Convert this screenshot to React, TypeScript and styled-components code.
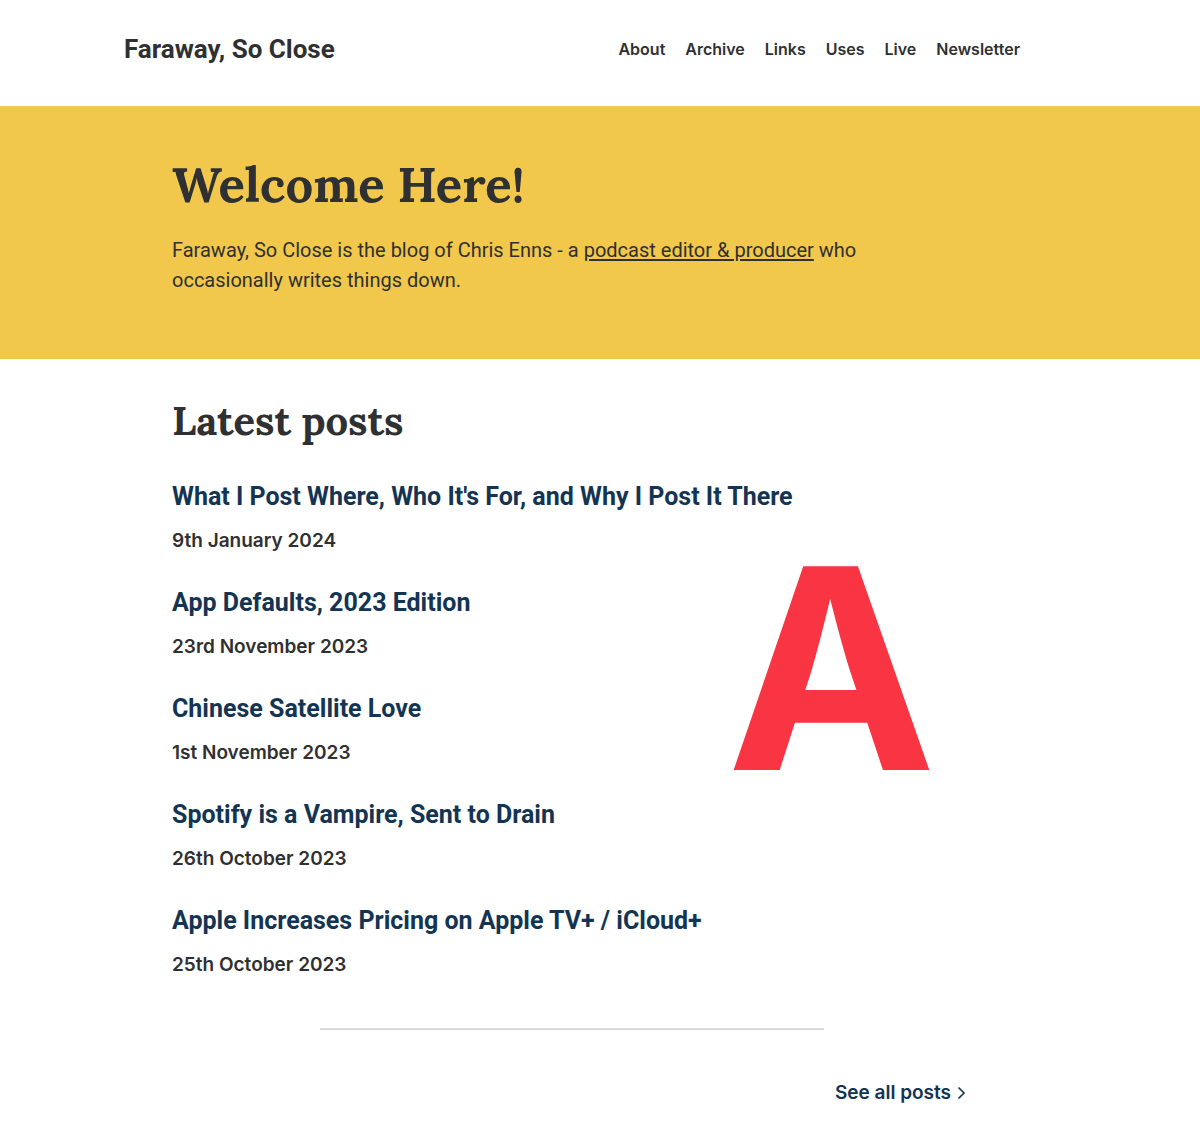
import React from "react";
import styled, { createGlobalStyle } from "styled-components";

const sans = `Roboto, "Liberation Sans", sans-serif`;
const grotesk = `Inter, "Liberation Sans", sans-serif`;
const serif = `Lora, "Noto Serif", "Liberation Serif", serif`;

const ink = "#2f3031";
const navy = "#133452";
const sun = "#f1c74c";

const GlobalStyle = createGlobalStyle`
  *, *::before, *::after {
    box-sizing: border-box;
  }

  body {
    margin: 0;
    background: #ffffff;
    color: ${ink};
    font-family: ${sans};
    font-size: 20px;
    line-height: 30px;
  }

  h1, h2, h3, p, ul {
    margin: 0;
    padding: 0;
  }

  ul {
    list-style: none;
  }

  a {
    color: inherit;
    text-decoration: none;
  }
`;

/* Every band keeps a wider gutter on its right side. */
const Band = styled.div`
  padding-left: 24px;
  padding-right: 80px;
`;

const HeaderBar = styled.header`
  display: flex;
  flex-wrap: wrap;
  align-items: center;
  justify-content: space-between;
  gap: 8px 24px;
  max-width: 896px;
  margin: 0 auto;
  padding: 32px 0 40px;
`;

const SiteName = styled.a`
  font-size: 26px;
  font-weight: 700;
  line-height: 34px;
`;

const NavList = styled.ul`
  display: flex;
  flex-wrap: wrap;
  gap: 4px 20px;
  font-family: ${grotesk};
  font-size: 16px;
  font-weight: 600;
`;

const Hero = styled(Band)`
  padding-top: 48px;
  padding-bottom: 64px;
  background: ${sun};
`;

const Column = styled.div`
  position: relative;
  max-width: 800px;
  margin: 0 auto;
`;

const Title = styled.h1`
  font-family: ${serif};
  font-size: 49px;
  font-weight: 700;
  line-height: 60px;
`;

const Intro = styled.p`
  max-width: 720px;
  margin-top: 21px;
`;

const IntroLink = styled.a`
  text-decoration: underline;
  text-decoration-thickness: 2px;
  text-underline-offset: 2px;
`;

const Latest = styled(Band)`
  padding-top: 32px;
  padding-bottom: 20px;
`;

const SectionTitle = styled.h2`
  font-family: ${serif};
  font-size: 40px;
  font-weight: 700;
  line-height: 60px;
`;

const PostList = styled.ul`
  display: grid;
  gap: 26px;
  margin-top: 25px;
`;

const PostTitle = styled.h3`
  color: ${navy};
  font-size: 25px;
  font-weight: 700;
  line-height: 42px;
`;

const PostDate = styled.p`
  margin-top: 8px;
  font-family: ${grotesk};
  font-size: 19px;
  font-weight: 600;
`;

const Divider = styled.hr`
  width: 63%;
  height: 2px;
  margin: 48px auto;
  border: 0;
  background: #d9dadc;
`;

const More = styled.div`
  display: flex;
  justify-content: flex-end;
  padding-right: 6px;
`;

const MoreLink = styled.a`
  display: flex;
  align-items: center;
  gap: 6px;
  color: ${navy};
  font-family: ${grotesk};
  font-size: 19px;
  font-weight: 600;
`;

const Grade = styled.span`
  position: absolute;
  top: 138px;
  right: 36px;
  color: #f93543;
  font-family: ${grotesk};
  font-size: 280px;
  font-weight: 700;
  line-height: 1;
  pointer-events: none;
`;

const links = ["About", "Archive", "Links", "Uses", "Live", "Newsletter"];

const posts = [
  { title: "What I Post Where, Who It's For, and Why I Post It There", date: "9th January 2024" },
  { title: "App Defaults, 2023 Edition", date: "23rd November 2023" },
  { title: "Chinese Satellite Love", date: "1st November 2023" },
  { title: "Spotify is a Vampire, Sent to Drain", date: "26th October 2023" },
  { title: "Apple Increases Pricing on Apple TV+ / iCloud+", date: "25th October 2023" },
];

export default function App() {
  return (
    <>
      <GlobalStyle />
      <Band>
        <HeaderBar>
          <SiteName href="#">Faraway, So Close</SiteName>
          <nav aria-label="Main">
            <NavList>
              {links.map((link) => (
                <li key={link}>
                  <a href="#">{link}</a>
                </li>
              ))}
            </NavList>
          </nav>
        </HeaderBar>
      </Band>
      <main>
        <Hero as="section">
          <Column>
            <Title>Welcome Here!</Title>
            <Intro>
              Faraway, So Close is the blog of Chris Enns - a{" "}
              <IntroLink href="#">podcast editor &amp; producer</IntroLink> who occasionally writes
              things down.
            </Intro>
          </Column>
        </Hero>
        <Latest as="section">
          <Column>
            <SectionTitle>Latest posts</SectionTitle>
            <PostList>
              {posts.map((post) => (
                <li key={post.title}>
                  <PostTitle>
                    <a href="#">{post.title}</a>
                  </PostTitle>
                  <PostDate>{post.date}</PostDate>
                </li>
              ))}
            </PostList>
            <Divider />
            <More>
              <MoreLink href="#">
                See all posts
                <svg width="9" height="14" viewBox="0 0 9 14" fill="none" aria-hidden="true">
                  <path d="M1.500 1.500 7 7l-5.500 5.500" stroke="currentColor" strokeWidth="1.600" />
                </svg>
              </MoreLink>
            </More>
            <Grade>A</Grade>
          </Column>
        </Latest>
      </main>
    </>
  );
}
